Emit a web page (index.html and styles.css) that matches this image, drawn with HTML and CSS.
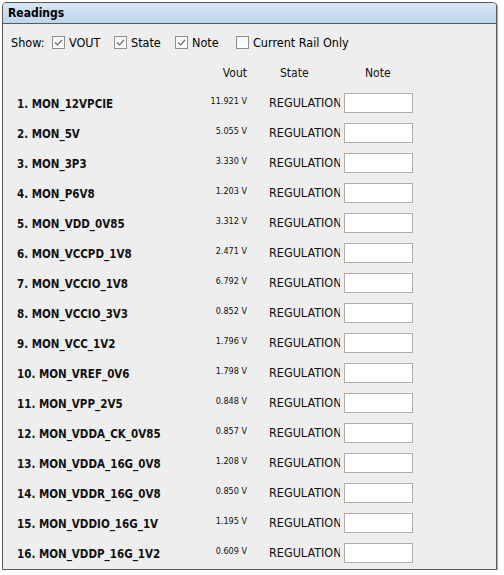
FILE: index.html
```html
<!DOCTYPE html>
<html>
<head>
<meta charset="utf-8">
<link rel="stylesheet" href="styles.css">
</head>
<body>
<div class="panel">
  <div class="title">Readings</div>
  <div class="content">
    <div class="show">
      <span class="show-label">Show:</span>
      <span class="opt w62"><span class="cb"><svg viewBox="0 0 13 13" width="13" height="13"><path d="M3 6.5 L5.5 9 L10 4" fill="none" stroke="#6b6b6b" stroke-width="1.2"/></svg></span>VOUT</span>
      <span class="opt w61"><span class="cb"><svg viewBox="0 0 13 13" width="13" height="13"><path d="M3 6.5 L5.5 9 L10 4" fill="none" stroke="#6b6b6b" stroke-width="1.2"/></svg></span>State</span>
      <span class="opt w61"><span class="cb"><svg viewBox="0 0 13 13" width="13" height="13"><path d="M3 6.5 L5.5 9 L10 4" fill="none" stroke="#6b6b6b" stroke-width="1.2"/></svg></span>Note</span>
      <span class="opt"><span class="cb"></span>Current Rail Only</span>
    </div>
    <div class="table">
      <div class="hdr"></div>
      <div class="hdr h-vout">Vout</div>
      <div class="hdr h-state">State</div>
      <div class="hdr h-note">Note</div>

      <div class="name">1. MON_12VPCIE</div><div class="vout">11.921 V</div><div class="state">REGULATION</div><div class="note"><span class="box"></span></div>
      <div class="name">2. MON_5V</div><div class="vout">5.055 V</div><div class="state">REGULATION</div><div class="note"><span class="box"></span></div>
      <div class="name">3. MON_3P3</div><div class="vout">3.330 V</div><div class="state">REGULATION</div><div class="note"><span class="box"></span></div>
      <div class="name">4. MON_P6V8</div><div class="vout">1.203 V</div><div class="state">REGULATION</div><div class="note"><span class="box"></span></div>
      <div class="name">5. MON_VDD_0V85</div><div class="vout">3.312 V</div><div class="state">REGULATION</div><div class="note"><span class="box"></span></div>
      <div class="name">6. MON_VCCPD_1V8</div><div class="vout">2.471 V</div><div class="state">REGULATION</div><div class="note"><span class="box"></span></div>
      <div class="name">7. MON_VCCIO_1V8</div><div class="vout">6.792 V</div><div class="state">REGULATION</div><div class="note"><span class="box"></span></div>
      <div class="name">8. MON_VCCIO_3V3</div><div class="vout">0.852 V</div><div class="state">REGULATION</div><div class="note"><span class="box"></span></div>
      <div class="name">9. MON_VCC_1V2</div><div class="vout">1.796 V</div><div class="state">REGULATION</div><div class="note"><span class="box"></span></div>
      <div class="name">10. MON_VREF_0V6</div><div class="vout">1.798 V</div><div class="state">REGULATION</div><div class="note"><span class="box"></span></div>
      <div class="name">11. MON_VPP_2V5</div><div class="vout">0.848 V</div><div class="state">REGULATION</div><div class="note"><span class="box"></span></div>
      <div class="name">12. MON_VDDA_CK_0V85</div><div class="vout">0.857 V</div><div class="state">REGULATION</div><div class="note"><span class="box"></span></div>
      <div class="name">13. MON_VDDA_16G_0V8</div><div class="vout">1.208 V</div><div class="state">REGULATION</div><div class="note"><span class="box"></span></div>
      <div class="name">14. MON_VDDR_16G_0V8</div><div class="vout">0.850 V</div><div class="state">REGULATION</div><div class="note"><span class="box"></span></div>
      <div class="name">15. MON_VDDIO_16G_1V</div><div class="vout">1.195 V</div><div class="state">REGULATION</div><div class="note"><span class="box"></span></div>
      <div class="name">16. MON_VDDP_16G_1V2</div><div class="vout">0.609 V</div><div class="state">REGULATION</div><div class="note"><span class="box"></span></div>
    </div>
  </div>
</div>
</body>
</html>
```
FILE: styles.css
```css
html, body {
  margin: 0;
  padding: 0;
  background: #ffffff;
}
body {
  font-family: Tahoma, "DejaVu Sans Condensed", "DejaVu Sans", sans-serif;
  font-size: 12px;
  color: #000;
  padding: 2px 0 0 2px;
}
.panel {
  box-sizing: border-box;
  width: 495px;
  height: 568px;
  border: 1px solid #5a5a5a;
  border-radius: 4px 4px 0 0;
  background: #eeeeee;
  box-shadow: 1px 1px 1px rgba(0,0,0,0.35);
  overflow: hidden;
}
.title {
  height: 20px;
  line-height: 21px;
  padding-left: 5px;
  font-weight: bold;
  font-size: 12px;
  background: linear-gradient(#d6e6f4, #bdd5ea);
  border-bottom: 1px solid #5a5a5a;
}
.content {
  padding-top: 8px;
}
.show {
  display: flex;
  align-items: center;
  height: 20px;
  padding-left: 8px;
  font-size: 12.5px;
}
.show-label {
  width: 41px;
}
.opt {
  display: flex;
  align-items: center;
  white-space: nowrap;
}
.w62 { width: 62px; }
.w61 { width: 61px; }
.cb {
  box-sizing: border-box;
  width: 13px;
  height: 13px;
  border: 1px solid #8e8f8f;
  background: linear-gradient(#f4f4f4, #ffffff);
  margin-right: 4px;
  display: flex;
  align-items: center;
  justify-content: center;
}
.cb svg {
  display: block;
  flex: none;
}
.table {
  margin-top: 8px;
  display: grid;
  grid-template-columns: 183px 47px 22px 71px 4px 69px;
  grid-auto-rows: 30px;
  grid-template-rows: 28px;
  padding-left: 14px;
}
.hdr {
  display: flex;
  align-items: center;
  color: #111;
  padding-bottom: 2px;
}
.h-vout {
  justify-content: flex-end;
}
.h-state {
  grid-column: 4;
  padding-left: 11px;
}
.h-note {
  grid-column: 6;
  padding-left: 21px;
}
.name {
  display: flex;
  align-items: center;
  font-weight: bold;
  font-size: 11.5px;
  color: #111;
  white-space: nowrap;
  padding-top: 1px;
}
.vout {
  display: flex;
  align-items: center;
  justify-content: flex-end;
  font-size: 9px;
  padding-bottom: 5px;
  white-space: nowrap;
  color: #111;
}
.state {
  grid-column: 4;
  display: flex;
  align-items: center;
  overflow: hidden;
  white-space: nowrap;
  padding-bottom: 2px;
  font-size: 12.5px;
  color: #111;
}
.note {
  grid-column: 6;
  display: flex;
  align-items: center;
}
.box {
  box-sizing: border-box;
  width: 69px;
  height: 20px;
  background: #ffffff;
  border: 1px solid #b5aea6;
}
```
